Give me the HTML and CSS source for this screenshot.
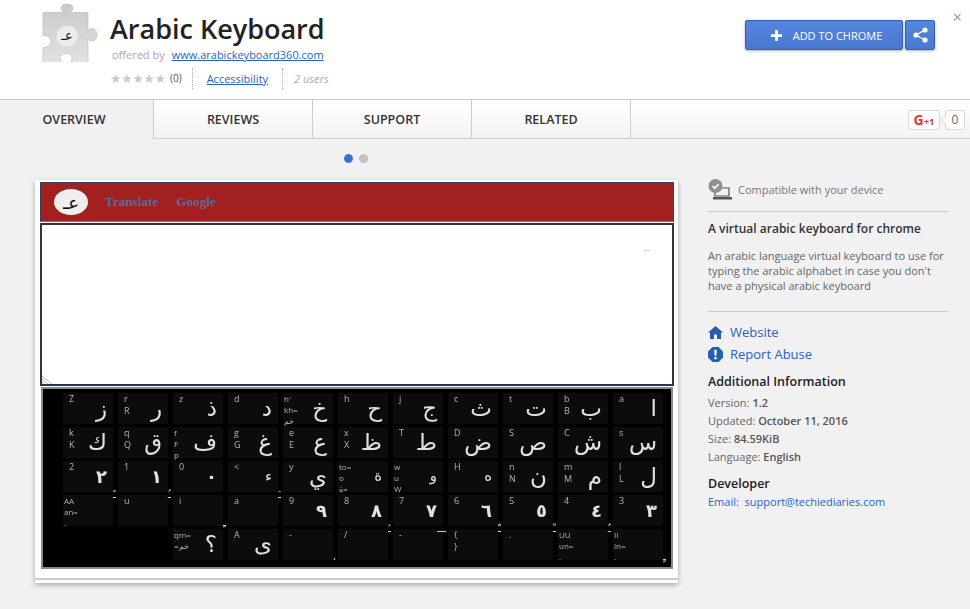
FILE: index.html
```html
<!DOCTYPE html>
<html lang="en">
<head>
    <meta charset="UTF-8">
    <meta name="viewport" content="width=device-width, initial-scale=1.0">
    <title>Arabic Keyboard</title>
    <link rel="stylesheet" href="styles.css">
</head>
<body>
    <header class="top">
        <svg class="puzzle" width="58" height="58" viewBox="0 0 58 58">
            <defs>
                <linearGradient id="puzzleFill" x1="0" y1="0" x2="0" y2="1">
                    <stop offset="0" stop-color="#c9c9c9"/>
                    <stop offset="1" stop-color="#e2e2e2"/>
                </linearGradient>
            </defs>
            <path d="M1 8.500h21c-2.500-2-3-3.500-3-4.500 0-2.500 3-4 6-4s6 1.500 6 4c0 1-.5 2.500-3 4.500h18v18c2-1.500 3-2 4.500-2 2.500 0 4.500 3 4.500 6.500s-2 6-4.500 6c-1.500 0-2.500-.5-4.500-2v23.500h-18c1.500-1.500 2-3 2-4.500 0-2.500-2.500-4.500-6-4.500s-6 2-6 4.500c0 1.500.5 3 2 4.500h-19v-15c3 0 8-1.500 8-6 0-4.500-5-6-8-6z" fill="url(#puzzleFill)" stroke="#b5b5b5" stroke-width=".6"/>
            <circle cx="25" cy="32" r="10.500" fill="#ececec"/>
            <text class="puzzle-glyph" x="0" y="0" text-anchor="middle" transform="translate(25 36)">عـ</text>
        </svg>
        <div class="top-info">
            <h1>Arabic Keyboard</h1>
            <div class="offered"><span>offered by</span><a href="#">www.arabickeyboard360.com</a></div>
            <div class="meta">
                <span class="stars">★★★★★</span>
                <span class="count">(0)</span>
                <a class="meta-link" href="#">Accessibility</a>
                <span class="users">2 users</span>
            </div>
        </div>
        <div class="actions">
            <button class="add-btn">
                <svg width="11" height="11" viewBox="0 0 12 12"><path d="M4.500 0h3v4.500h4.500v3h-4.500v4.500h-3v-4.500h-4.500v-3h4.500z" fill="#fff"/></svg>
                ADD TO CHROME
            </button>
            <button class="share-btn">
                <svg width="15" height="16" viewBox="0 0 15 16"><path d="M12 3L3 8l9 5" fill="none" stroke="#fff" stroke-width="1.300"/><circle cx="12" cy="3" r="2.600" fill="#fff"/><circle cx="3" cy="8" r="2.600" fill="#fff"/><circle cx="12" cy="13" r="2.600" fill="#fff"/></svg>
            </button>
        </div>
        <span class="close">×</span>
    </header>

    <nav class="tabs">
        <a class="tab active" href="#">OVERVIEW</a>
        <a class="tab" href="#">REVIEWS</a>
        <a class="tab" href="#">SUPPORT</a>
        <a class="tab" href="#">RELATED</a>
        <div class="gplus">
            <span class="gplus-btn"><b>G</b><i>+1</i></span>
            <span class="gplus-count">0</span>
        </div>
    </nav>

    <main class="content">
        <section class="gallery">
            <div class="dots"><span class="dot on"></span><span class="dot"></span></div>
            <div class="card">
                <div class="app-bar">
                    <span class="app-logo"><span>عـ</span></span>
                    <span class="app-link">Translate</span>
                    <span class="app-link">Google</span>
                </div>
                <div class="app-text">
                    <span class="app-dots">...</span>
                    <svg class="app-grip" width="10" height="8" viewBox="0 0 10 8"><path d="M0 0l10 8M0 3l6 5M0 6l2 2" stroke="#bbb" fill="none"/></svg>
                </div>
                <div class="keyboard">
                    <div class="key"><span class="lat">Z</span><span class="ar">ز</span></div>
                    <div class="key"><span class="lat">r<br>R</span><span class="ar">ر</span></div>
                    <div class="key"><span class="lat">z</span><span class="ar">ذ</span></div>
                    <div class="key"><span class="lat">d</span><span class="ar">د</span></div>
                    <div class="key"><span class="lat tight">h'<br>kh=<br>خم</span><span class="ar">خ</span></div>
                    <div class="key"><span class="lat">h</span><span class="ar">ح</span></div>
                    <div class="key"><span class="lat">j</span><span class="ar">ج</span></div>
                    <div class="key"><span class="lat">c</span><span class="ar">ث</span></div>
                    <div class="key"><span class="lat">t</span><span class="ar">ت</span></div>
                    <div class="key"><span class="lat">b<br>B</span><span class="ar">ب</span></div>
                    <div class="key"><span class="lat">a</span><span class="ar">ا</span></div>

                    <div class="key"><span class="lat">k<br>K</span><span class="ar">ك</span></div>
                    <div class="key"><span class="lat">q<br>Q</span><span class="ar">ق</span></div>
                    <div class="key"><span class="lat tight">f<br>F<br>p</span><span class="ar">ف</span></div>
                    <div class="key"><span class="lat">g<br>G</span><span class="ar">غ</span></div>
                    <div class="key"><span class="lat">e<br>E</span><span class="ar">ع</span></div>
                    <div class="key"><span class="lat">x<br>X</span><span class="ar">ظ</span></div>
                    <div class="key"><span class="lat">T</span><span class="ar">ط</span></div>
                    <div class="key"><span class="lat">D</span><span class="ar">ض</span></div>
                    <div class="key"><span class="lat">S</span><span class="ar">ص</span></div>
                    <div class="key"><span class="lat">C</span><span class="ar">ش</span></div>
                    <div class="key"><span class="lat">s</span><span class="ar">س</span></div>

                    <div class="key"><span class="lat">2</span><span class="ar num">٢</span></div>
                    <div class="key"><span class="lat">1</span><span class="ar num">١</span></div>
                    <div class="key"><span class="lat">0</span><span class="ar num">٠</span></div>
                    <div class="key"><span class="lat">&lt;</span><span class="ar small">ء</span></div>
                    <div class="key"><span class="lat">y</span><span class="ar">ي</span></div>
                    <div class="key"><span class="lat tight">to=<br>o<br>ة=</span><span class="ar small">ة</span></div>
                    <div class="key"><span class="lat tight">w<br>u<br>W</span><span class="ar small">و</span></div>
                    <div class="key"><span class="lat">H</span><span class="ar small">ه</span></div>
                    <div class="key"><span class="lat">n<br>N</span><span class="ar">ن</span></div>
                    <div class="key"><span class="lat">m<br>M</span><span class="ar">م</span></div>
                    <div class="key"><span class="lat">l<br>L</span><span class="ar">ل</span></div>

                    <div class="key"><span class="lat tight">AA<br>an=<br>.</span><span class="mark mark-top">ـً</span></div>
                    <div class="key"><span class="lat">u</span><span class="mark mark-top">ـُ</span></div>
                    <div class="key"><span class="lat">i</span><span class="mark mark-low">ـِ</span></div>
                    <div class="key"><span class="lat">a</span><span class="mark mark-top">ـَ</span></div>
                    <div class="key"><span class="lat">9</span><span class="ar num">٩</span></div>
                    <div class="key"><span class="lat">8</span><span class="ar num">٨</span></div>
                    <div class="key"><span class="lat">7</span><span class="ar num">٧</span></div>
                    <div class="key"><span class="lat">6</span><span class="ar num">٦</span></div>
                    <div class="key"><span class="lat">5</span><span class="ar num">٥</span></div>
                    <div class="key"><span class="lat">4</span><span class="ar num">٤</span></div>
                    <div class="key"><span class="lat">3</span><span class="ar num">٣</span></div>

                    <div class="key blank"></div>
                    <div class="key blank"></div>
                    <div class="key"><span class="lat tight">qm=<br>=خم</span><span class="ar">؟</span></div>
                    <div class="key"><span class="lat">A</span><span class="ar">ى</span></div>
                    <div class="key"><span class="lat">-</span><span class="mark mark-low">،</span></div>
                    <div class="key"><span class="lat">/</span><span class="mark mark-top">ـٔ</span></div>
                    <div class="key"><span class="lat">-</span><span class="mark mark-top">ـــ</span></div>
                    <div class="key"><span class="lat">{<br>}</span><span class="mark mark-top">ـّ</span></div>
                    <div class="key"><span class="lat">.</span><span class="mark mark-top">ـْ</span></div>
                    <div class="key"><span class="lat tight">UU<br>un=<br>.</span><span class="mark mark-top">ـٌ</span></div>
                    <div class="key"><span class="lat tight">II<br>in=<br>.</span><span class="mark mark-low">ـٍ</span></div>
                </div>
                <div class="card-foot"></div>
            </div>
        </section>

        <aside class="side">
            <div class="compat">
                <svg width="24" height="21" viewBox="0 0 24 21">
                    <path d="M7 9h14v8H7z" fill="none" stroke="#555" stroke-width="1.200"/>
                    <path d="M5 18h19v2.500H5z" fill="#555"/>
                    <circle cx="7.500" cy="7" r="7" fill="#8f8f8f"/>
                    <path d="M4.500 7l2.200 2.300 4-4.300" fill="none" stroke="#fff" stroke-width="1.600"/>
                </svg>
                <span>Compatible with your device</span>
            </div>
            <div class="about">
                <h2>A virtual arabic keyboard for chrome</h2>
                <p>An arabic language virtual keyboard to use for typing the arabic alphabet in case you don't have a physical arabic keyboard</p>
            </div>
            <ul class="side-links">
                <li>
                    <svg width="15" height="13" viewBox="0 0 15 13"><path d="M7.500 0L15 6.500h-2V13H9V8.500H6V13H2V6.500H0z" fill="#2a5db0"/></svg>
                    <a href="#">Website</a>
                </li>
                <li>
                    <svg width="15" height="15" viewBox="0 0 15 15"><path d="M4.500 0h6L15 4.500v6L10.500 15h-6L0 10.500v-6z" fill="#2a5db0"/><path d="M6.300 2.800h2.400l-.3 6H6.600zM6.300 10h2.400v2.200H6.300z" fill="#fff"/></svg>
                    <a href="#">Report Abuse</a>
                </li>
            </ul>
            <h3>Additional Information</h3>
            <div class="info-row">Version: <b>1.2</b></div>
            <div class="info-row">Updated: <b>October 11, 2016</b></div>
            <div class="info-row">Size: <b>84.59KiB</b></div>
            <div class="info-row">Language: <b>English</b></div>
            <h3 class="dev">Developer</h3>
            <a class="email" href="#">Email:&nbsp; support@techiediaries.com</a>
        </aside>
    </main>
</body>
</html>
```

FILE: styles.css
```css
* {
    box-sizing: border-box;
}

html, body {
    margin: 0;
    height: 609px;
    overflow: hidden;
}

body {
    font-family: "Open Sans", Arial, sans-serif;
    background-color: #f1f1f1;
    color: #333;
}

a {
    color: #2a5fc9;
}

/* header */
.top {
    position: relative;
    display: flex;
    height: 100px;
    padding-left: 42px;
    background-color: #fff;
    border-bottom: 1px solid #ccc;
}

.puzzle {
    margin-top: 4px;
}

.puzzle-glyph {
    font-family: "DejaVu Sans", sans-serif;
    font-size: 13px;
    fill: #111;
}

.top-info {
    margin-left: 10px;
    padding-top: 10px;
}

h1 {
    margin: 0;
    font-size: 27px;
    line-height: 38px;
    font-weight: 600;
    color: #222;
}

.offered {
    display: flex;
    gap: 7px;
    margin: -1px 0 0 2px;
    font-size: 11px;
    line-height: 15px;
    color: #aaa;
}

.meta {
    display: flex;
    align-items: center;
    height: 20px;
    margin-top: 6px;
    font-size: 11px;
}

.stars {
    font-family: "DejaVu Sans", sans-serif;
    font-size: 12.500px;
    color: #c9c9c9;
}

.count {
    margin-left: 4px;
    font-size: 10px;
    color: #555;
}

.meta-link {
    margin-left: 10px;
    padding: 3px 0 3px 14px;
    border-left: 1px dotted #aaa;
}

.users {
    margin-left: 14px;
    padding: 3px 0 3px 11px;
    border-left: 1px dotted #aaa;
    font-style: italic;
    color: #aaa;
}

.actions {
    display: flex;
    gap: 2px;
    margin: 20px 0 0 auto;
    padding-right: 35px;
    align-self: flex-start;
}

.add-btn, .share-btn {
    display: flex;
    align-items: center;
    justify-content: center;
    height: 30px;
    padding: 0;
    color: #fff;
    font-family: inherit;
    font-size: 11px;
    background: linear-gradient(#5585dc, #4a78d0);
    border: 1px solid #3560b8;
    border-radius: 2px;
    box-shadow: 0 1px 3px rgba(0, 0, 0, .3);
}

.add-btn {
    width: 158px;
    gap: 11px;
    padding-left: 5px;
}

.share-btn {
    width: 30px;
}

.close {
    position: absolute;
    top: 8px;
    right: 8px;
    font-size: 16px;
    line-height: 18px;
    color: #999;
}

/* tabs */
.tabs {
    display: flex;
    height: 39px;
    background: linear-gradient(#fff, #f3f3f3);
    border-bottom: 1px solid #ccc;
}

.tab {
    width: 159px;
    height: 38px;
    border-right: 1px solid #ccc;
    color: #333;
    font-size: 12.500px;
    font-weight: 600;
    line-height: 39px;
    text-align: center;
    text-decoration: none;
}

.tab.active {
    width: 154px;
    height: 39px;
    padding-right: 5px;
    background-color: #f1f1f1;
}

.gplus {
    display: flex;
    gap: 5px;
    margin: 10px 5px 0 auto;
}

.gplus-btn, .gplus-count {
    height: 20px;
    background-color: #fff;
    border: 1px solid #d9d9d9;
    border-radius: 2px;
    line-height: 18px;
    text-align: center;
}

.gplus-btn {
    width: 32px;
    color: #d73d32;
    font-size: 11px;
}

.gplus-btn b {
    font-size: 14px;
}

.gplus-btn i {
    font-style: normal;
    font-weight: 700;
    font-size: 9.500px;
}

.gplus-count {
    position: relative;
    width: 20px;
    font-size: 12px;
    color: #666;
}

.gplus-count::before {
    content: "";
    position: absolute;
    left: -4px;
    top: 5px;
    width: 7px;
    height: 7px;
    background-color: #fff;
    border-left: 1px solid #d9d9d9;
    border-bottom: 1px solid #d9d9d9;
    transform: rotate(45deg);
}

/* main */
.content {
    display: flex;
    padding-left: 35px;
}

.gallery {
    width: 643px;
}

.dots {
    display: flex;
    justify-content: center;
    align-items: center;
    gap: 6px;
    height: 39px;
    margin-bottom: 2px;
    padding-right: 2px;
}

.dot {
    width: 9px;
    height: 9px;
    border-radius: 50%;
    background-color: #c4c4c4;
    border: 1px solid #bbb;
}

.dot.on {
    background-color: #3d6fcf;
    border-color: #3d6fcf;
}

.card {
    display: flex;
    flex-direction: column;
    height: 403px;
    padding: 2px 4px 0 5px;
    background-color: #fff;
    box-shadow: 0 2px 5px rgba(0, 0, 0, .3);
}

.app-bar {
    display: flex;
    align-items: center;
    flex: none;
    height: 40px;
    padding-left: 13px;
    background-color: #a32020;
    border: 1px solid #34465e;
    border-bottom-color: #6a7a90;
}

.app-logo {
    display: flex;
    align-items: center;
    justify-content: center;
    width: 34px;
    height: 26px;
    margin-right: 17px;
    border-radius: 50%;
    background-color: #eee;
    color: #111;
    font-family: "DejaVu Sans", sans-serif;
    font-size: 18px;
}

.app-link {
    margin-right: 18px;
    font-family: "Liberation Serif", serif;
    font-size: 13.200px;
    font-weight: 700;
    color: #5a6a9c;
}

.app-text {
    position: relative;
    flex: none;
    height: 163px;
    margin-top: 1px;
    background-color: #fff;
    border: 2px solid #27344a;
}

.app-dots {
    position: absolute;
    top: 16px;
    right: 22px;
    font-size: 9px;
    color: #999;
}

.app-grip {
    position: absolute;
    left: 0;
    bottom: 0;
}

.keyboard {
    display: grid;
    flex: none;
    grid-template-columns: repeat(11, 50px);
    grid-auto-rows: 31px;
    gap: 3px 5px;
    width: 632px;
    height: 182px;
    margin: 1px 0 0 1px;
    padding: 4px 0 0 20px;
    background-color: #000;
    border: 2px solid #8b8b8b;
    filter: blur(.4px);
}

.key {
    position: relative;
    display: flex;
    justify-content: space-between;
    background-color: #0c0c0c;
    color: #ddd;
}

.key.blank {
    background-color: transparent;
}

.lat {
    padding: 0 0 0 6px;
    font-size: 9px;
    line-height: 12px;
    color: #b5b5b5;
    opacity: .99;
}

.lat.tight {
    padding-left: 1px;
    font-size: 8px;
    line-height: 11px;
    white-space: nowrap;
}

.ar {
    padding-right: 6px;
    font-family: "DejaVu Sans", sans-serif;
    font-size: 23px;
    line-height: 31px;
    color: #e4e4e4;
    opacity: .99;
}

.ar.num {
    font-size: 18px;
    font-weight: 700;
}

.ar.small {
    font-size: 15px;
}

.mark {
    position: absolute;
    right: -3px;
    font-family: "DejaVu Sans", sans-serif;
    font-size: 10px;
    line-height: 12px;
    color: #ddd;
    opacity: .99;
}

.mark-top {
    top: -6px;
}

.mark-low {
    bottom: -3px;
}

.card-foot {
    height: 11px;
    margin: 0 -4px 0 -5px;
    border-bottom: 2px solid #ccc;
}

/* sidebar */
.side {
    width: 240px;
    margin-left: 30px;
    padding-top: 40px;
    font-size: 11px;
    color: #666;
}

.compat {
    display: flex;
    align-items: flex-start;
    gap: 6px;
    height: 33px;
    border-bottom: 1px solid #ccc;
    color: #777;
}

.compat span {
    margin-top: 3px;
    line-height: 15px;
}

.about {
    padding: 8px 0 18px;
    border-bottom: 1px solid #ccc;
}

h2 {
    margin: 0 0 11px;
    font-size: 12px;
    line-height: 17px;
    font-weight: 600;
    color: #333;
}

.about p {
    margin: 0;
    line-height: 15px;
}

.side-links {
    margin: 0;
    padding: 9px 0 0;
    list-style: none;
}

.side-links li {
    display: flex;
    align-items: center;
    gap: 7px;
    height: 22px;
    font-size: 13px;
}

.side-links a {
    text-decoration: none;
}

h3 {
    margin: 8px 0 3px;
    font-size: 12.500px;
    line-height: 18px;
    font-weight: 600;
    color: #222;
}

.info-row {
    line-height: 18px;
}

.info-row b {
    font-weight: 600;
    color: #555;
}

h3.dev {
    margin: 9px 0 0;
}

.email {
    font-size: 11px;
    line-height: 18px;
    text-decoration: none;
}
```
